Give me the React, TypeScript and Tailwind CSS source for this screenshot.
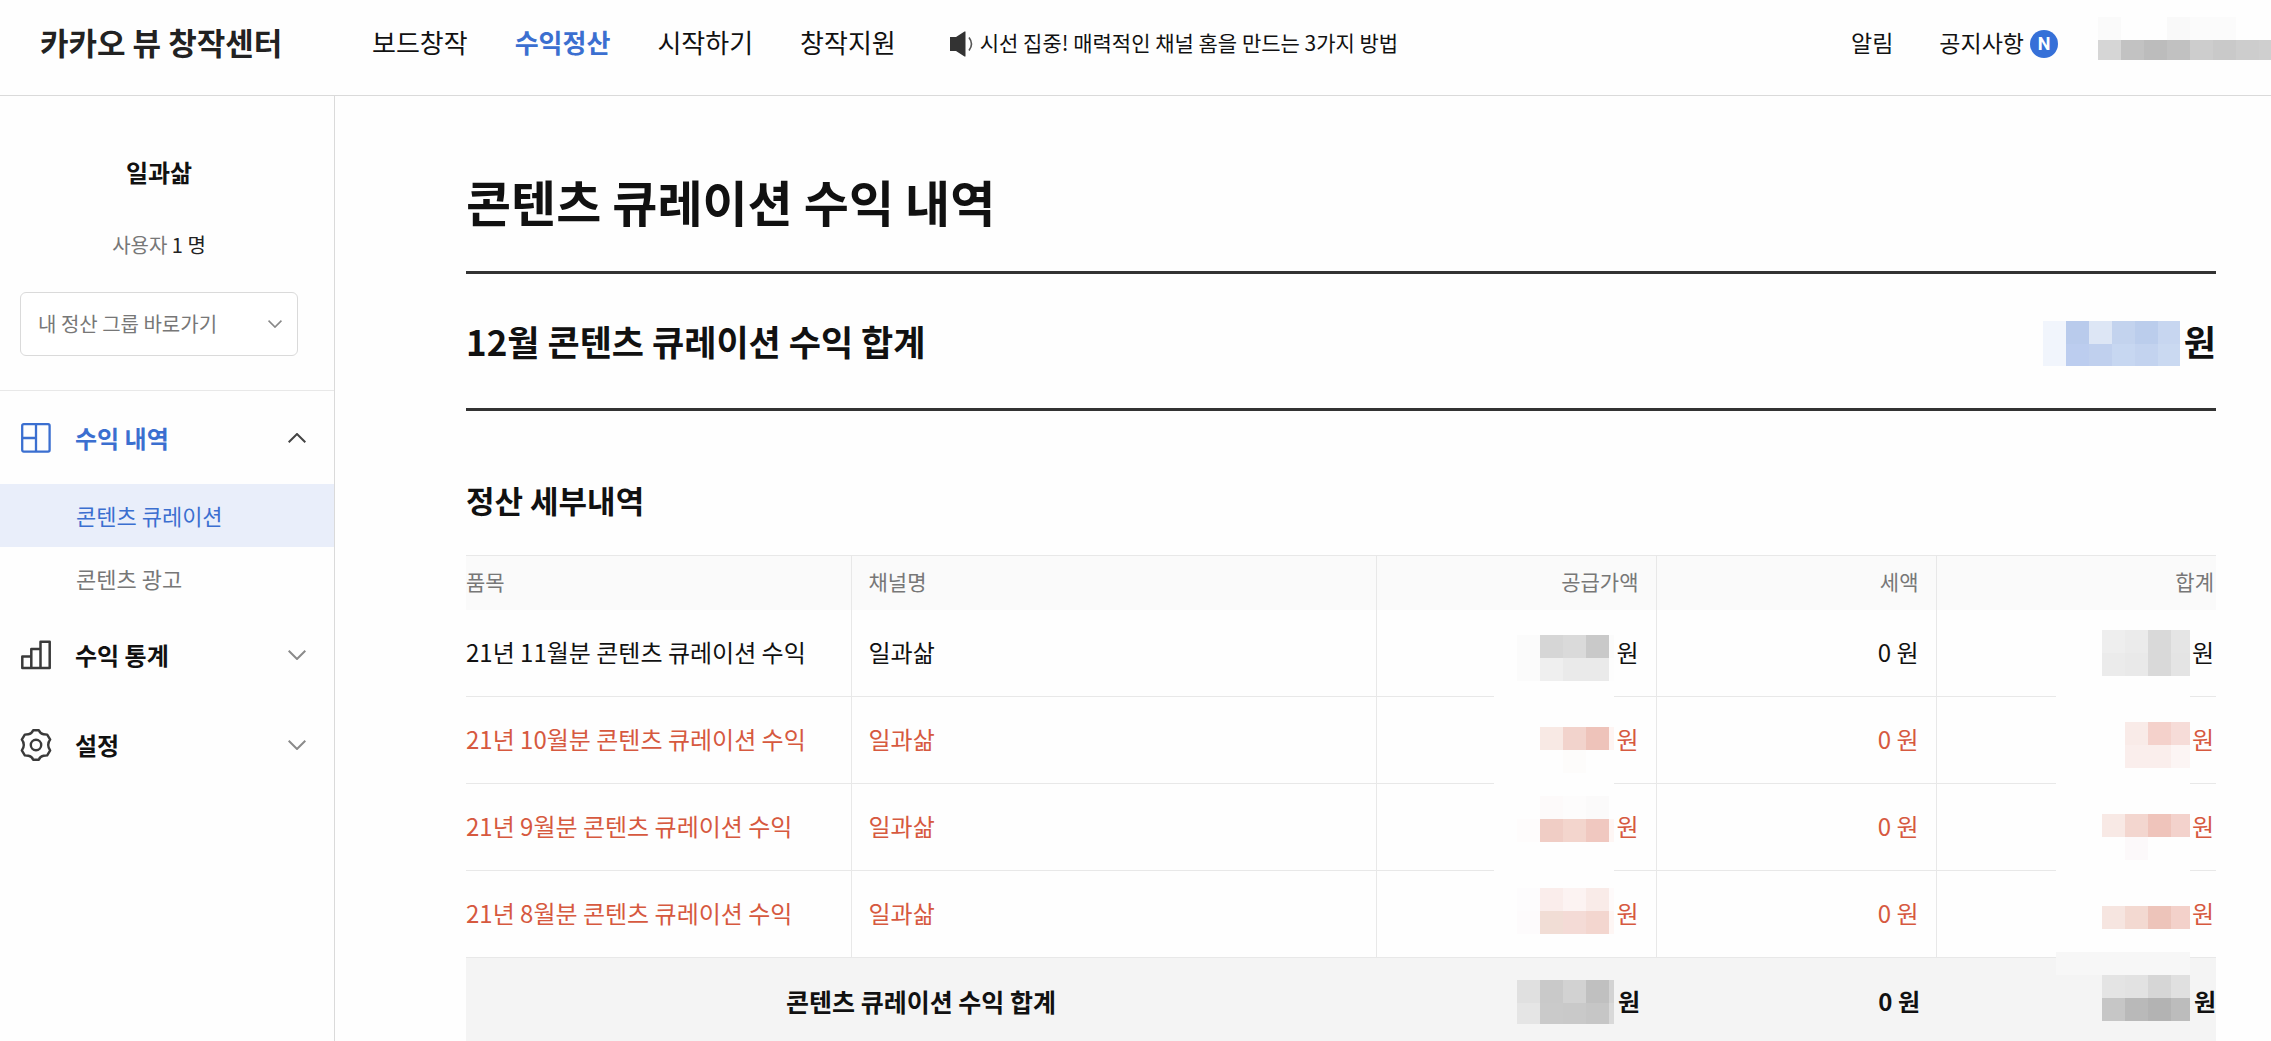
import React from "react";

const chevron = (d: string, className: string) => (
  <svg viewBox="0 0 18 10" fill="none" stroke="currentColor" strokeWidth="2" className={className} aria-hidden="true">
    <path d={d} />
  </svg>
);
const UP = "M0.7 9.3 L9 1 L17.3 9.3";
const DOWN = "M0.7 0.7 L9 9 L17.3 0.7";

/* Pixelated block that hides a private value. "" leaves a cell transparent. */
function Mosaic({ rows, lastWidth, lastHeight = 23 }: { rows: string[][]; lastWidth: number; lastHeight?: number }) {
  return (
    <div aria-hidden="true">
      {rows.map((row, r) => (
        <div key={r} className="flex" style={{ height: r === rows.length - 1 ? lastHeight : 23 }}>
          {row.map((color, c) => (
            <span
              key={c}
              className="shrink-0"
              style={{ width: c === row.length - 1 ? lastWidth : 23, backgroundColor: color || "transparent" }}
            />
          ))}
        </div>
      ))}
    </div>
  );
}

const W = "#fefefe";
const blank = Array<string>(6).fill(W);
const clear = Array<string>(6).fill("");

const accountMosaic = [
  ["#fafafa", "", "", "#f9f9f9", "#fbfbfb", "#fbfbfb", "", ""],
  ["#d6d6d6", "#c2c2c2", "#bcbcbc", "#c1c1c1", "#cdcdcd", "#c9c9c9", "#cdcdcd", "#cfcfcf"],
];
const sumMosaic = [
  ["#f1f5fc", "#b9cbec", "#dde6f5", "#c3d3ee", "#bbcdec", "#c7d6f0"],
  ["#f1f5fc", "#bccdef", "#c0d0ee", "#c7d7f1", "#c3d3ef", "#cad9f1"],
];
const supplyMosaic = [
  [W, "#fbfbfb", "#d6d6d6", "#dadada", "#c9c9c9", "#fbfbfb"],
  [W, "#fbfbfb", "#efefef", "#eaeaea", "#eaeaea", "#fdfdfd"],
  blank,
  blank,
  [W, W, "#f8e9e4", "#f2d3cc", "#eec3ba", "#fef4f2"],
  [W, W, W, "#fdfcfb", W, W],
  blank,
  [W, W, "#fdfafa", "#fdfcfc", "#fbfafa", W],
  [W, "#fefcfc", "#f0cdc5", "#f3d5cd", "#f0c8c0", "#fef6f4"],
  blank,
  blank,
  [W, "#fdfcfd", "#faedeb", "#fcf3f2", "#f9ebe8", "#fefafa"],
  [W, "#fdfbfc", "#f1ddd5", "#f4dbd6", "#f3d6cf", "#fef6f4"],
  blank,
  clear,
  ["", "#e0e0e0", "#c9c9c9", "#d2d2d2", "#c0c0c0", "#d3d3d3"],
  ["", "#e5e5e5", "#cacaca", "#c9c9c9", "#c6c6c6", "#d9d9d9"],
];
const totalMosaic = [
  ["", "", "#eeeeee", "#ebebeb", "#d9d9d9", "#e5e5e5"],
  ["", "", "#ebebeb", "#e9e9e9", "#d9d9d9", "#e4e4e4"],
  blank,
  blank,
  [W, W, W, "#f9ebe8", "#f4d1cb", "#f6dcd8"],
  [W, W, W, "#faeeec", "#faeeec", "#fcf5f4"],
  blank,
  blank,
  [W, W, "#f8e9e5", "#f3d6cf", "#efc4bb", "#f3d2cc"],
  [W, W, W, "#fcf9fa", W, W],
  blank,
  blank,
  [W, W, "#f6e5e0", "#f3d9d1", "#edc4ba", "#f3d1ca"],
  blank,
  Array<string>(6).fill("#f7f7f7"),
  ["", "", "#e4e4e4", "#e2e2e2", "#d6d6d6", "#e0e0e0"],
  ["", "", "#c6c6c6", "#b9b9b9", "#b3b3b3", "#bcbcbc"],
];

function Header() {
  return (
    <header className="flex h-24 shrink-0 items-center border-b border-[#dadada] pb-[11px] pl-10">
      <a href="#" className="w-[332px] shrink-0 text-[31px] leading-10 font-bold text-[#222]">
        카카오 뷰 창작센터
      </a>
      <nav className="flex shrink-0 gap-[47px] text-[26px] leading-10">
        <a href="#">보드창작</a>
        <a href="#" className="font-bold text-[#3b6fd0]">수익정산</a>
        <a href="#">시작하기</a>
        <a href="#">창작지원</a>
      </nav>
      <a href="#" className="ml-[54px] flex shrink-0 items-center gap-[6px] text-[21px] leading-8">
        <svg width="24" height="26" viewBox="0 0 24 26" className="mt-1" aria-hidden="true">
          <path d="M0 6H6L14.5 0.5H15.5V25.5H14.5L6 20H0Z" fill="#333" />
          <path d="M19 6.5Q24 13 19 19.5" fill="none" stroke="#555" strokeWidth="1.6" />
        </svg>
        시선 집중! 매력적인 채널 홈을 만드는 3가지 방법
      </a>
      <div className="ml-auto flex shrink-0 items-center text-[23px] leading-8">
        <a href="#">알림</a>
        <a href="#" className="ml-[46px] flex items-center gap-[6px]">
          공지사항
          <span className="mt-1 flex size-7 items-center justify-center rounded-full bg-[#3670d8] font-[Roboto] text-[18px] font-bold text-white">
            N
          </span>
        </a>
        <div className="-mt-2 ml-10">
          <Mosaic rows={accountMosaic} lastWidth={12} lastHeight={20} />
        </div>
      </div>
    </header>
  );
}

function GridIcon() {
  return (
    <svg width="30" height="30" viewBox="0 0 30 30" fill="none" stroke="#3b6fd0" strokeWidth="2.3" aria-hidden="true">
      <rect x="1.2" y="1.2" width="27.4" height="27.4" rx="1.5" />
      <path d="M15 1V28.5M1 15H15" />
    </svg>
  );
}
function BarsIcon() {
  return (
    <svg width="30" height="30" viewBox="0 0 30 30" fill="none" stroke="#3a3a3a" strokeWidth="2.5" strokeLinejoin="round" aria-hidden="true">
      <path d="M1.3 28V16.5H10.3V28ZM10.3 28V9H19.5V28ZM19.5 28V1.7H28.7V28Z" />
    </svg>
  );
}
function GearIcon() {
  return (
    <svg width="32" height="32" viewBox="0 0 32 32" fill="none" stroke="#3a3a3a" strokeWidth="2.4" strokeLinejoin="round" aria-hidden="true">
      <circle cx="16" cy="16" r="5.2" />
      <path d="M13.2 1.3H18.8Q20.2 4.8 23.6 5.2L27.2 5.6L30.2 10.6Q28.2 13 28.2 16Q28.2 19 30.2 21.4L27.2 26.4L23.6 26.8Q20.2 27.2 18.8 30.7H13.2Q11.8 27.2 8.4 26.8L4.8 26.4L1.8 21.4Q3.8 19 3.8 16Q3.8 13 1.8 10.6L4.8 5.6L8.4 5.2Q11.8 4.8 13.2 1.3Z" />
    </svg>
  );
}

function MenuButton({ icon, label, active = false }: { icon: React.ReactNode; label: string; active?: boolean }) {
  return (
    <button
      type="button"
      aria-expanded={active}
      className={`flex w-full items-center pr-7 pl-5 text-left text-[24px] leading-9 font-bold ${active ? "h-[93px] text-[#3b6fd0]" : "h-[90px] text-[#111]"}`}
    >
      <span className="flex w-[55px] justify-start">
        <span className="flex w-8 justify-center">{icon}</span>
      </span>
      {label}
      {chevron(active ? UP : DOWN, `ml-auto h-[10px] w-[18px] ${active ? "text-[#444]" : "text-[#8a8a8a]"}`)}
    </button>
  );
}

function Sidebar() {
  return (
    <aside className="w-[335px] shrink-0 border-r border-[#dadada]">
      <div className="flex flex-col border-b border-[#e8e8e8] pt-[58px] pr-9 pb-[34px] pl-5">
        <strong className="text-center text-[24px] leading-9 font-bold">일과삶</strong>
        <p className="mt-[37px] text-center text-[20px] leading-9 text-[#777]">
          사용자 <span className="text-[#222]">1 명</span>
        </p>
        <div className="relative mt-[29px]">
          <select
            aria-label="내 정산 그룹 바로가기"
            className="h-16 w-full appearance-none rounded-md border border-[#dadada] bg-white px-[17px] text-[20px] text-[#777]"
          >
            <option>내 정산 그룹 바로가기</option>
          </select>
          {chevron(DOWN, "pointer-events-none absolute top-7 right-4 h-2 w-[14px] text-[#888]")}
        </div>
      </div>
      <nav>
        <MenuButton icon={<GridIcon />} label="수익 내역" active />
        <a href="#" className="flex h-[63px] items-center bg-[#e9eefa] pl-[76px] text-[22px] text-[#3b6fd0]">
          콘텐츠 큐레이션
        </a>
        <a href="#" className="flex h-[63px] items-center pl-[76px] text-[22px] text-[#777]">
          콘텐츠 광고
        </a>
        <MenuButton icon={<BarsIcon />} label="수익 통계" />
        <MenuButton icon={<GearIcon />} label="설정" />
      </nav>
    </aside>
  );
}

const items = [
  { name: "21년 11월분 콘텐츠 큐레이션 수익", held: false },
  { name: "21년 10월분 콘텐츠 큐레이션 수익", held: true },
  { name: "21년 9월분 콘텐츠 큐레이션 수익", held: true },
  { name: "21년 8월분 콘텐츠 큐레이션 수익", held: true },
];

function Details() {
  return (
    <div className="relative">
      <table className="w-full table-fixed border-collapse text-[24px] leading-9">
        <colgroup>
          <col className="w-[22%]" />
          <col className="w-[30%]" />
          <col className="w-[16%]" />
          <col className="w-[16%]" />
          <col className="w-[16%]" />
        </colgroup>
        <thead>
          <tr className="h-[54px] border-t border-[#e8e8e8] bg-[#fafafa] text-[21px] text-[#777]">
            <th scope="col" className="border-r border-[#e8e8e8] pb-1 text-left font-normal">품목</th>
            <th scope="col" className="border-r border-[#e8e8e8] pb-1 pl-[17px] text-left font-normal">채널명</th>
            <th scope="col" className="border-r border-[#e8e8e8] pr-[17px] pb-1 text-right font-normal">공급가액</th>
            <th scope="col" className="border-r border-[#e8e8e8] pr-[17px] pb-1 text-right font-normal">세액</th>
            <th scope="col" className="pr-[2px] pb-1 text-right font-normal">합계</th>
          </tr>
        </thead>
        <tbody>
          {items.map((item) => (
            <tr key={item.name} className={`h-[87px] border-b border-[#e8e8e8] ${item.held ? "text-[#d6593f]" : "text-[#111]"}`}>
              <td className="border-r border-[#e8e8e8] pb-[2px] whitespace-nowrap">{item.name}</td>
              <td className="border-r border-[#e8e8e8] pb-[2px] pl-[17px]">일과삶</td>
              <td className="border-r border-[#e8e8e8] pr-[17px] pb-[2px] text-right">원</td>
              <td className="border-r border-[#e8e8e8] pr-[17px] pb-[2px] text-right">0 원</td>
              <td className="pr-[2px] pb-[2px] text-right">원</td>
            </tr>
          ))}
        </tbody>
        <tfoot>
          <tr className="h-[84px] bg-[#f4f4f4] font-bold text-[#111]">
            <th scope="row" colSpan={2} className="pt-[2px] text-center text-[25px]">콘텐츠 큐레이션 수익 합계</th>
            <td className="pt-[2px] pr-4 text-right">원</td>
            <td className="pt-[2px] pr-4 text-right">0 원</td>
            <td className="pt-[2px] text-right">원</td>
          </tr>
        </tfoot>
      </table>
      <div className="pointer-events-none absolute top-[80px] right-[calc(32%+42px)]">
        <Mosaic rows={supplyMosaic} lastWidth={5} lastHeight={21} />
      </div>
      <div className="pointer-events-none absolute top-[75px] right-[26px]">
        <Mosaic rows={totalMosaic} lastWidth={19} />
      </div>
    </div>
  );
}

export default function App() {
  return (
    <div className="flex min-h-screen flex-col bg-[#fefefe] font-['Noto_Sans_CJK_KR',sans-serif] text-[#111]">
      <Header />
      <div className="flex grow">
        <Sidebar />
        <main className="min-w-0 grow pr-[55px] pl-[131px]">
          <h1 className="pt-[69px] pb-[34px] text-[49px] leading-[72px] font-bold">콘텐츠 큐레이션 수익 내역</h1>
          <section className="flex h-[140px] items-center justify-between border-y-[3px] border-[#333] text-[35px] leading-[52px] font-bold">
            <h2>12월 콘텐츠 큐레이션 수익 합계</h2>
            <div className="flex items-center gap-1">
              <div className="pt-1">
                <Mosaic rows={sumMosaic} lastWidth={22} lastHeight={22} />
              </div>
              원
            </div>
          </section>
          <h2 className="pt-[67px] pb-[33px] text-[31px] leading-[44px] font-bold">정산 세부내역</h2>
          <Details />
        </main>
      </div>
    </div>
  );
}
